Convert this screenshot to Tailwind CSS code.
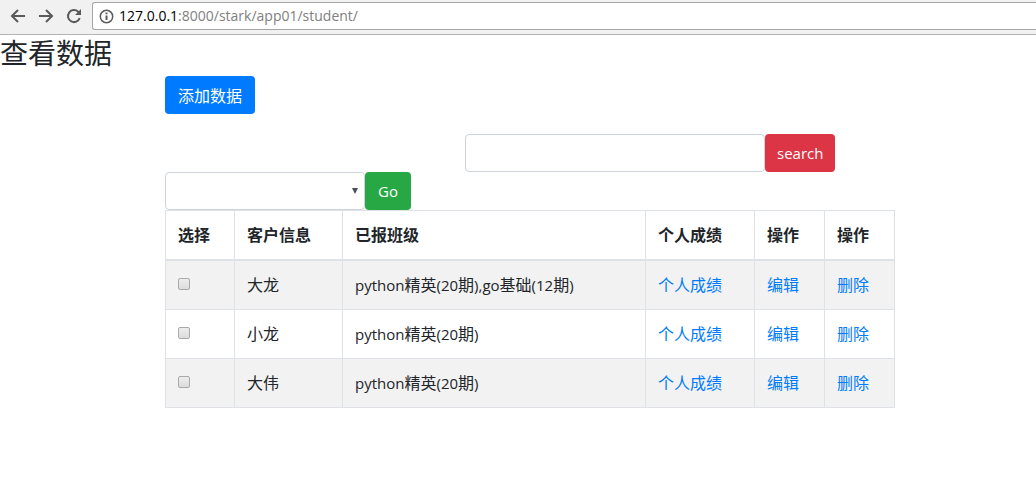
<!DOCTYPE html>
<html lang="zh-CN">
<head>
<meta charset="utf-8">
<title>查看数据</title>
<script src="https://cdn.jsdelivr.net/npm/@tailwindcss/browser@4"></script>
</head>
<body class="min-h-screen bg-white font-['Noto_Sans_CJK_SC',sans-serif] text-base text-[#212529]">
<header class="flex h-[35px] items-start border-b border-[#b3b3b3] bg-[#f1f1f1] pt-[2px]">
  <nav class="flex h-7 items-center gap-2 px-2 text-[#5a5a5a]">
    <button type="button" aria-label="Back"><svg class="size-5" viewBox="0 0 20 20" fill="none" stroke="currentColor" stroke-width="2"><path d="M17 10H4M10 4L4 10L10 16"/></svg></button>
    <button type="button" aria-label="Forward"><svg class="size-5" viewBox="0 0 20 20" fill="none" stroke="currentColor" stroke-width="2"><path d="M3 10H16M10 4L16 10L10 16"/></svg></button>
    <button type="button" aria-label="Reload"><svg class="size-5" viewBox="0 0 20 20" fill="none" stroke="currentColor" stroke-width="2"><path d="M15.7 12A6 6 0 1 1 14.2 5.8L16 7.5"/><path d="M17 3V9H11Z" fill="currentColor" stroke="none"/></svg></button>
  </nav>
  <div class="flex h-7 flex-1 items-center gap-[5px] rounded-l-[3px] border border-r-0 border-[#a6a6a6] bg-white pl-[6px]">
    <svg class="size-[15px] text-[#5a5a5a]" viewBox="0 0 15 15" fill="none" stroke="currentColor" stroke-width="1.5"><circle cx="7.5" cy="7.5" r="6.2"/><path stroke-width="2" d="M7.5 6.500V11M7.5 3.500V5.300"/></svg>
    <span class="font-['Open_Sans',sans-serif] text-sm leading-6 text-[#808080]"><span class="text-black">127.0.0.1</span>:8000/stark/app01/student/</span>
  </div>
</header>
<h1 class="mb-[7px] pt-px text-[28px] leading-[33px]">查看数据</h1>
<main class="pr-[141px] pl-[165px]">
  <button type="button" class="block h-[38px] rounded bg-[#007bff] px-[13px] text-white">添加数据</button>
  <form class="mt-5 flex pl-[300px]">
    <input type="text" aria-label="search" class="h-[38px] w-[300px] rounded border border-[#ced4da] bg-white px-3">
    <button type="button" class="h-[38px] rounded bg-[#dc3545] px-3 font-['Open_Sans',sans-serif] text-[15px] text-white">search</button>
  </form>
  <form>
    <div class="flex">
      <div class="relative">
        <select aria-label="批量操作" class="block h-[38px] w-[200px] appearance-none rounded border border-[#ced4da] bg-white px-3"><option></option></select>
        <svg class="pointer-events-none absolute top-4 right-[7px] h-[6px] w-[6px]" viewBox="0 0 6 6" fill="#495057"><path d="M0 0H6L3 6Z"/></svg>
      </div>
      <button type="button" class="h-[38px] rounded bg-[#28a745] px-[13px] font-['Open_Sans',sans-serif] text-[15px] text-white">Go</button>
    </div>
    <table class="w-full table-fixed border-separate border-spacing-0 border-t border-l border-[#dee2e6] text-left [&_td]:border-r [&_td]:border-b [&_td]:border-[#dee2e6] [&_td]:px-3 [&_td]:pt-[11px] [&_td]:pb-[13px] [&_td]:align-top [&_td]:leading-6 [&_td_span]:font-['Open_Sans',sans-serif] [&_td_span]:text-[15px] [&_td_span]:leading-4 [&_th]:border-r [&_th]:border-b-2 [&_th]:border-[#dee2e6] [&_th]:px-3 [&_th]:pt-[11px] [&_th]:pb-[13px] [&_th]:leading-6 [&_a]:text-[#007bff]">
      <colgroup><col class="w-[69px]"><col class="w-[108px]"><col><col class="w-[109px]"><col class="w-[70px]"><col class="w-[70px]"></colgroup>
      <thead><tr><th>选择</th><th>客户信息</th><th>已报班级</th><th>个人成绩</th><th>操作</th><th>操作</th></tr></thead>
      <tbody class="[&>tr:nth-child(odd)]:bg-[#f2f2f2]">
        <tr>
          <td><input type="checkbox" aria-label="大龙" class="mt-[6px] block size-3 appearance-none rounded-[2px] border border-[#a9a9a9] bg-linear-to-b from-[#eeeeee] to-[#dcdcdc] checked:bg-[#007bff]"></td>
          <td>大龙</td>
          <td><span>python</span>精英<span>(20</span>期<span>),go</span>基础<span>(12</span>期<span>)</span></td>
          <td><a href="#">个人成绩</a></td><td><a href="#">编辑</a></td><td><a href="#">删除</a></td>
        </tr>
        <tr>
          <td><input type="checkbox" aria-label="小龙" class="mt-[6px] block size-3 appearance-none rounded-[2px] border border-[#a9a9a9] bg-linear-to-b from-[#eeeeee] to-[#dcdcdc] checked:bg-[#007bff]"></td>
          <td>小龙</td>
          <td><span>python</span>精英<span>(20</span>期<span>)</span></td>
          <td><a href="#">个人成绩</a></td><td><a href="#">编辑</a></td><td><a href="#">删除</a></td>
        </tr>
        <tr>
          <td><input type="checkbox" aria-label="大伟" class="mt-[6px] block size-3 appearance-none rounded-[2px] border border-[#a9a9a9] bg-linear-to-b from-[#eeeeee] to-[#dcdcdc] checked:bg-[#007bff]"></td>
          <td>大伟</td>
          <td><span>python</span>精英<span>(20</span>期<span>)</span></td>
          <td><a href="#">个人成绩</a></td><td><a href="#">编辑</a></td><td><a href="#">删除</a></td>
        </tr>
      </tbody>
    </table>
  </form>
</main>
</body>
</html>
